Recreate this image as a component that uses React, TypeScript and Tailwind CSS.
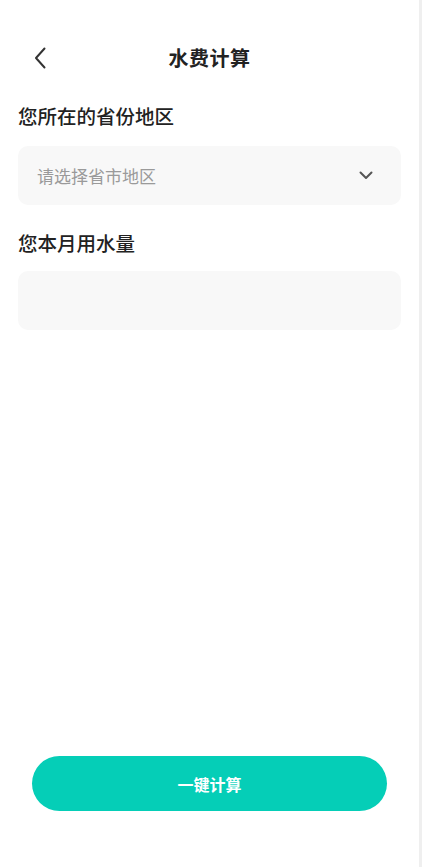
import React from "react";

const font = { fontFamily: '"Noto Sans CJK SC", "Noto Sans", sans-serif' };

export default function App() {
  return (
    <div className="flex w-full h-[867px] bg-white overflow-hidden" style={font}>
      <div className="flex flex-col w-[419px] h-full">
        <div className="relative mt-[36px] h-[44px] flex items-center justify-center">
          <svg
            className="absolute left-[33px] top-[11px]"
            width="14"
            height="22"
            viewBox="0 0 14 22"
            fill="none"
          >
            <path d="M11.5 1.5 L3 11 L11.5 20.5" stroke="#333" strokeWidth="2" strokeLinecap="round" strokeLinejoin="round" />
          </svg>
          <span className="text-[20px] leading-[28px] font-bold text-[#222] tracking-[0.5px]">水费计算</span>
        </div>
        <div className="mt-[22px] px-[18px] text-[19.5px] leading-[28px] font-medium text-[#222]">您所在的省份地区</div>
        <div className="mt-[16px] mx-[18px] h-[59px] rounded-[10px] bg-[#f8f8f8] flex items-center justify-between pl-[19px] pr-[28px]">
          <span className="text-[17px] text-[#9a9a9a]">请选择省市地区</span>
          <svg width="14" height="9" viewBox="0 0 14 9" fill="none">
            <path d="M1.5 1.5 L7 7 L12.5 1.5" stroke="#555" strokeWidth="2" strokeLinecap="round" strokeLinejoin="round" />
          </svg>
        </div>
        <div className="mt-[24px] px-[18px] text-[19.5px] leading-[28px] font-medium text-[#222]">您本月用水量</div>
        <div className="mt-[14px] mx-[18px] h-[59px] rounded-[10px] bg-[#f8f8f8]" />
        <div className="mt-auto mb-[56px] mx-[32px] h-[55px] rounded-full bg-[#05ceb7] flex items-center justify-center">
          <span className="text-[16px] font-bold text-white">一键计算</span>
        </div>
      </div>
      <div className="w-[3px] h-full bg-[#efefef]" />
    </div>
  );
}
